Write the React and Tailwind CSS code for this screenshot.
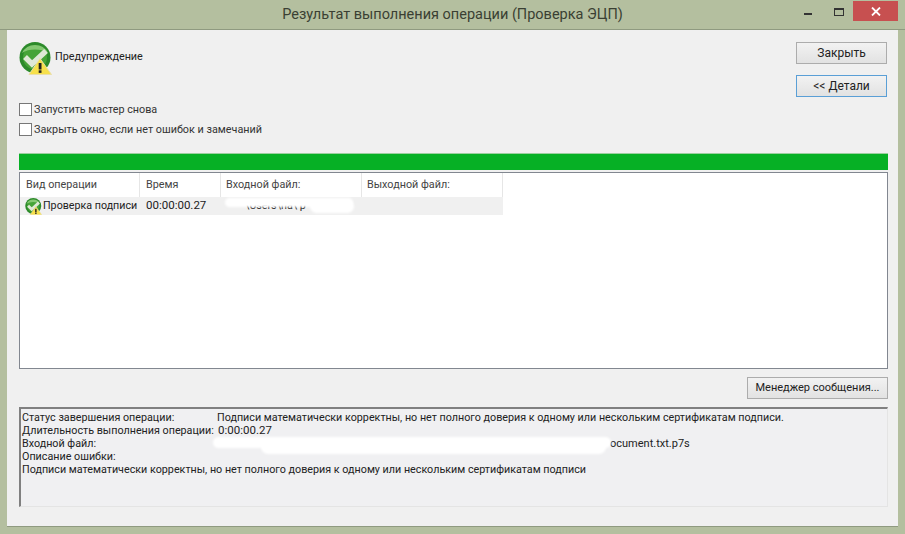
const FONT = "font-['Roboto','Noto_Sans',sans-serif]";

function StatusIcon({ size = 33 }) {
  return (
    <svg width={size} height={size} viewBox="0 0 33 33" className="shrink-0">
      <circle cx="16" cy="15.5" r="15.5" fill="#2c8a2a" />
      <circle cx="16" cy="15.5" r="12" fill="#46a437" />
      <path d="M3 11 A14.5 14.5 0 0 1 29 11 A18 11 0 0 0 3 11Z" fill="#84c872" />
      <path d="M6 15 L13 22 L27 9" fill="none" stroke="#dfe8d6" strokeWidth="5.5" />
      <path d="M21 16.5 L32.5 32.5 L10 32.5 Z" fill="#f7e04a" stroke="#eadfa8" strokeWidth="1" strokeLinejoin="round" />
      <rect x="19.7" y="21" width="2.8" height="6.5" fill="#222" />
      <rect x="19.7" y="28.3" width="2.8" height="2.6" fill="#222" />
    </svg>
  );
}

function WinButton({ children, focused, className = "" }) {
  return (
    <button
      className={`h-[22px] border bg-gradient-to-b from-[#f2f2f2] to-[#e2e2e2] text-[#222] whitespace-nowrap ${
        focused ? "border-[#5a9fd6]" : "border-[#acacac]"
      } ${className}`}
    >
      {children}
    </button>
  );
}

function Check({ label }) {
  return (
    <label className="flex items-center gap-[2px] h-[13px] text-[10.8px] text-[#333]">
      <span className="w-[13px] h-[13px] border border-[#777] bg-white shrink-0" />
      <span className="pt-[2px]">{label}</span>
    </label>
  );
}

const COLS = [
  { title: "Вид операции", w: "w-[120px] pl-[6px]" },
  { title: "Время", w: "w-[81px] pl-[6px]" },
  { title: "Входной файл:", w: "w-[141px] pl-[5px]" },
  { title: "Выходной файл:", w: "w-[141px] pl-[5px]" },
];

export default function App() {
  return (
    <div className={`w-[905px] h-[534px] bg-[#b4bf9f] flex flex-col overflow-hidden ${FONT}`}>
      <div className="h-[30px] shrink-0 relative flex items-center justify-center text-[14.5px] text-[#3a3f33] border-b border-[#8f9a80]">
        Результат выполнения операции (Проверка ЭЦП)
        <div className="absolute right-[7px] top-[1px] flex items-start">
          <div className="w-[34px] h-[21px] flex items-end justify-center pb-[7px]">
            <span className="w-[8px] h-[2px] bg-[#333]" />
          </div>
          <div className="w-[28px] h-[21px] flex items-center justify-center">
            <span className="w-[10px] h-[8px] border border-[#333] border-t-2" />
          </div>
          <div className="w-[45px] h-[20px] bg-[#c75050] flex items-center justify-center text-white">
            <svg width="10" height="9" viewBox="0 0 10 9">
              <path d="M1 0.5 L9 8.5 M9 0.5 L1 8.5" stroke="#fff" strokeWidth="1.8" />
            </svg>
          </div>
        </div>
      </div>

      <div className="mx-[7px] h-[497px] bg-[#f0f0f0] border-b border-[#8f9a80] pl-[12px] pr-[10px] flex flex-col">
        <div className="flex justify-between pt-[12px] h-[123px] shrink-0">
          <div>
            <div className="flex items-start">
              <StatusIcon size={33} />
              <span className="text-[10.8px] text-[#222] mt-[7px] ml-[3px]">Предупреждение</span>
            </div>
            <div className="mt-[28px] flex flex-col gap-[7px]">
              <Check label="Запустить мастер снова" />
              <Check label="Закрыть окно, если нет ошибок и замечаний" />
            </div>
          </div>
          <div className="flex flex-col gap-[11px] mr-[1px]">
            <WinButton className="w-[91px] text-[12px]">Закрыть</WinButton>
            <WinButton focused className="w-[91px] text-[12px]">&lt;&lt; Детали</WinButton>
          </div>
        </div>

        <div className="h-[17px] shrink-0 bg-[#06b025] border-t border-[#9ccf9f]" />

        <div className="mt-[2px] h-[197px] shrink-0 border border-[#828790] bg-white">
          <div className="flex h-[24px] items-center text-[10.8px] text-[#444]">
            {COLS.map((c) => (
              <div key={c.title} className={`${c.w} h-full flex items-center border-r border-[#e6e6e6]`}>
                {c.title}
              </div>
            ))}
          </div>
          <div className="relative flex h-[18px] w-[483px] items-center bg-[#f0f0f0] text-[10.7px] text-[#222]">
            <div className="w-[120px] flex items-center pl-[5px] whitespace-nowrap">
              <StatusIcon size={17} />
              <span className="ml-[1px]">Проверка подписи</span>
            </div>
            <div className="w-[81px] pl-[6px] text-[11.5px]">00:00:00.27</div>
            <div className="w-[141px] pl-[24px] whitespace-nowrap overflow-hidden">\Users\na\ p</div>
            <div className="absolute left-[205px] top-[1px] w-[128px] h-[9px] bg-white rounded-full blur-[1px]" />
            <div className="absolute left-[290px] top-[3px] w-[44px] h-[13px] bg-white rounded-full blur-[1px]" />
          </div>
        </div>

        <div className="h-[38px] shrink-0 flex items-center justify-end">
          <WinButton className="w-[141px] text-[11px]">Менеджер сообщения...</WinButton>
        </div>

        <div className="relative h-[100px] shrink-0 bg-[#f0f0f2] border-2 border-r border-b border-t-[#808080] border-l-[#808080] border-r-[#e4e4e4] border-b-[#e4e4e4] pl-[1px] pt-[2px] text-[10.75px] leading-[13px] text-[#222] whitespace-nowrap">
          <div className="flex">
            <span className="w-[195px]">Статус завершения операции:</span>
            <span>Подписи математически корректны, но нет полного доверия к одному или нескольким сертификатам подписи.</span>
          </div>
          <div className="flex">
            <span className="w-[196px]">Длительность выполнения операции:</span>
            <span className="text-[11.5px]">0:00:00.27</span>
          </div>
          <div className="flex">
            <span className="w-[195px]">Входной файл:</span>
            <span className="ml-[393px] text-[11px]">ocument.txt.p7s</span>
          </div>
          <div>Описание ошибки:</div>
          <div>Подписи математически корректны, но нет полного доверия к одному или нескольким сертификатам подписи</div>
          <div className="absolute left-[192px] top-[28px] w-[398px] h-[11px] bg-white rounded-full blur-[1px]" />
          <div className="absolute left-[240px] top-[31px] w-[345px] h-[14px] bg-white rounded-full blur-[1px]" />
        </div>
      </div>
    </div>
  );
}
